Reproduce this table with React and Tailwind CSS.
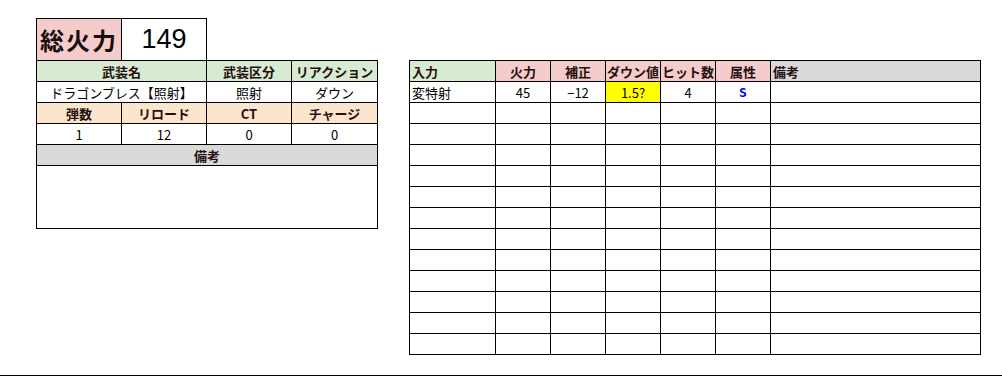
import React from "react";

const jp = { fontFamily: '"MS PGothic", "Noto Sans CJK JP", "Liberation Sans", sans-serif' };

const cell = "border border-black p-0 h-[21px] text-[13px] leading-none text-center";
const head = "border border-black p-0 h-[21px] text-[13px] leading-none font-bold text-[#241010]";

function WeaponCard() {
  return (
    <table className="table-fixed border-collapse w-[341px]" style={jp}>
      <colgroup>
        <col className="w-[85px]" />
        <col className="w-[85px]" />
        <col className="w-[85px]" />
        <col className="w-[86px]" />
      </colgroup>
      <tbody>
        <tr className="h-[42px]">
          <td className="border border-black bg-[#f4cccc] text-[24px] font-semibold text-center leading-none tracking-[2px] text-[#1a0d0d]">総火力</td>
          <td className="border border-black text-[27px] text-center leading-none" style={{ fontFamily: '"Liberation Sans", sans-serif' }}>149</td>
          <td className="border-0" />
          <td className="border-0" />
        </tr>
        <tr>
          <td colSpan={2} className={`${head} bg-[#d9ead3] text-center`}>武装名</td>
          <td className={`${head} bg-[#d9ead3] text-center`}>武装区分</td>
          <td className={`${head} bg-[#d9ead3] text-center`}>リアクション</td>
        </tr>
        <tr>
          <td colSpan={2} className={cell}>ドラゴンブレス【照射】</td>
          <td className={cell}>照射</td>
          <td className={cell}>ダウン</td>
        </tr>
        <tr>
          <td className={`${head} bg-[#fce5cd] text-center`}>弾数</td>
          <td className={`${head} bg-[#fce5cd] text-center`}>リロード</td>
          <td className={`${head} bg-[#fce5cd] text-center`}>CT</td>
          <td className={`${head} bg-[#fce5cd] text-center`}>チャージ</td>
        </tr>
        <tr>
          <td className={cell}>1</td>
          <td className={cell}>12</td>
          <td className={cell}>0</td>
          <td className={cell}>0</td>
        </tr>
        <tr>
          <td colSpan={4} className={`${head} bg-[#d9d9d9] text-center`}>備考</td>
        </tr>
        <tr className="h-[63px]">
          <td colSpan={4} className="border border-black" />
        </tr>
      </tbody>
    </table>
  );
}

const blankRows = Array.from({ length: 12 }, (_, i) => i);

function InputTable() {
  return (
    <table className="table-fixed border-collapse w-[571px]" style={jp}>
      <colgroup>
        <col className="w-[86px]" />
        <col className="w-[55px]" />
        <col className="w-[55px]" />
        <col className="w-[55px]" />
        <col className="w-[55px]" />
        <col className="w-[55px]" />
        <col className="w-[210px]" />
      </colgroup>
      <tbody>
        <tr>
          <td className={`${head} bg-[#d9ead3] text-left pl-[2px]`}>入力</td>
          <td className={`${head} bg-[#f4cccc] text-center`}>火力</td>
          <td className={`${head} bg-[#f4cccc] text-center`}>補正</td>
          <td className={`${head} bg-[#f4cccc] text-center`}>ダウン値</td>
          <td className={`${head} bg-[#f4cccc] text-center`}>ヒット数</td>
          <td className={`${head} bg-[#f4cccc] text-center`}>属性</td>
          <td className={`${head} bg-[#d9d9d9] text-left pl-[2px]`}>備考</td>
        </tr>
        <tr>
          <td className={`${cell} pl-[2px]`} style={{ textAlign: "left" }}>変特射</td>
          <td className={cell}>45</td>
          <td className={cell}>−12</td>
          <td className={`${cell} bg-[#ffff00]`}>1.5?</td>
          <td className={cell}>4</td>
          <td className={`${cell} text-[#0000ff] font-bold`} style={{ fontFamily: '"DejaVu Sans Mono", monospace' }}>S</td>
          <td className={cell} />
        </tr>
        {blankRows.map((r) => (
          <tr key={r}>
            <td className={cell} />
            <td className={cell} />
            <td className={cell} />
            <td className={cell} />
            <td className={cell} />
            <td className={cell} />
            <td className={cell} />
          </tr>
        ))}
      </tbody>
    </table>
  );
}

export default function App() {
  return (
    <div className="w-[1002px] h-[376px] bg-white border-b border-black overflow-hidden text-black">
      <div className="flex items-start pt-[18px] pl-[36px]">
        <WeaponCard />
        <div className="ml-[31px] mt-[42px]">
          <InputTable />
        </div>
      </div>
    </div>
  );
}
